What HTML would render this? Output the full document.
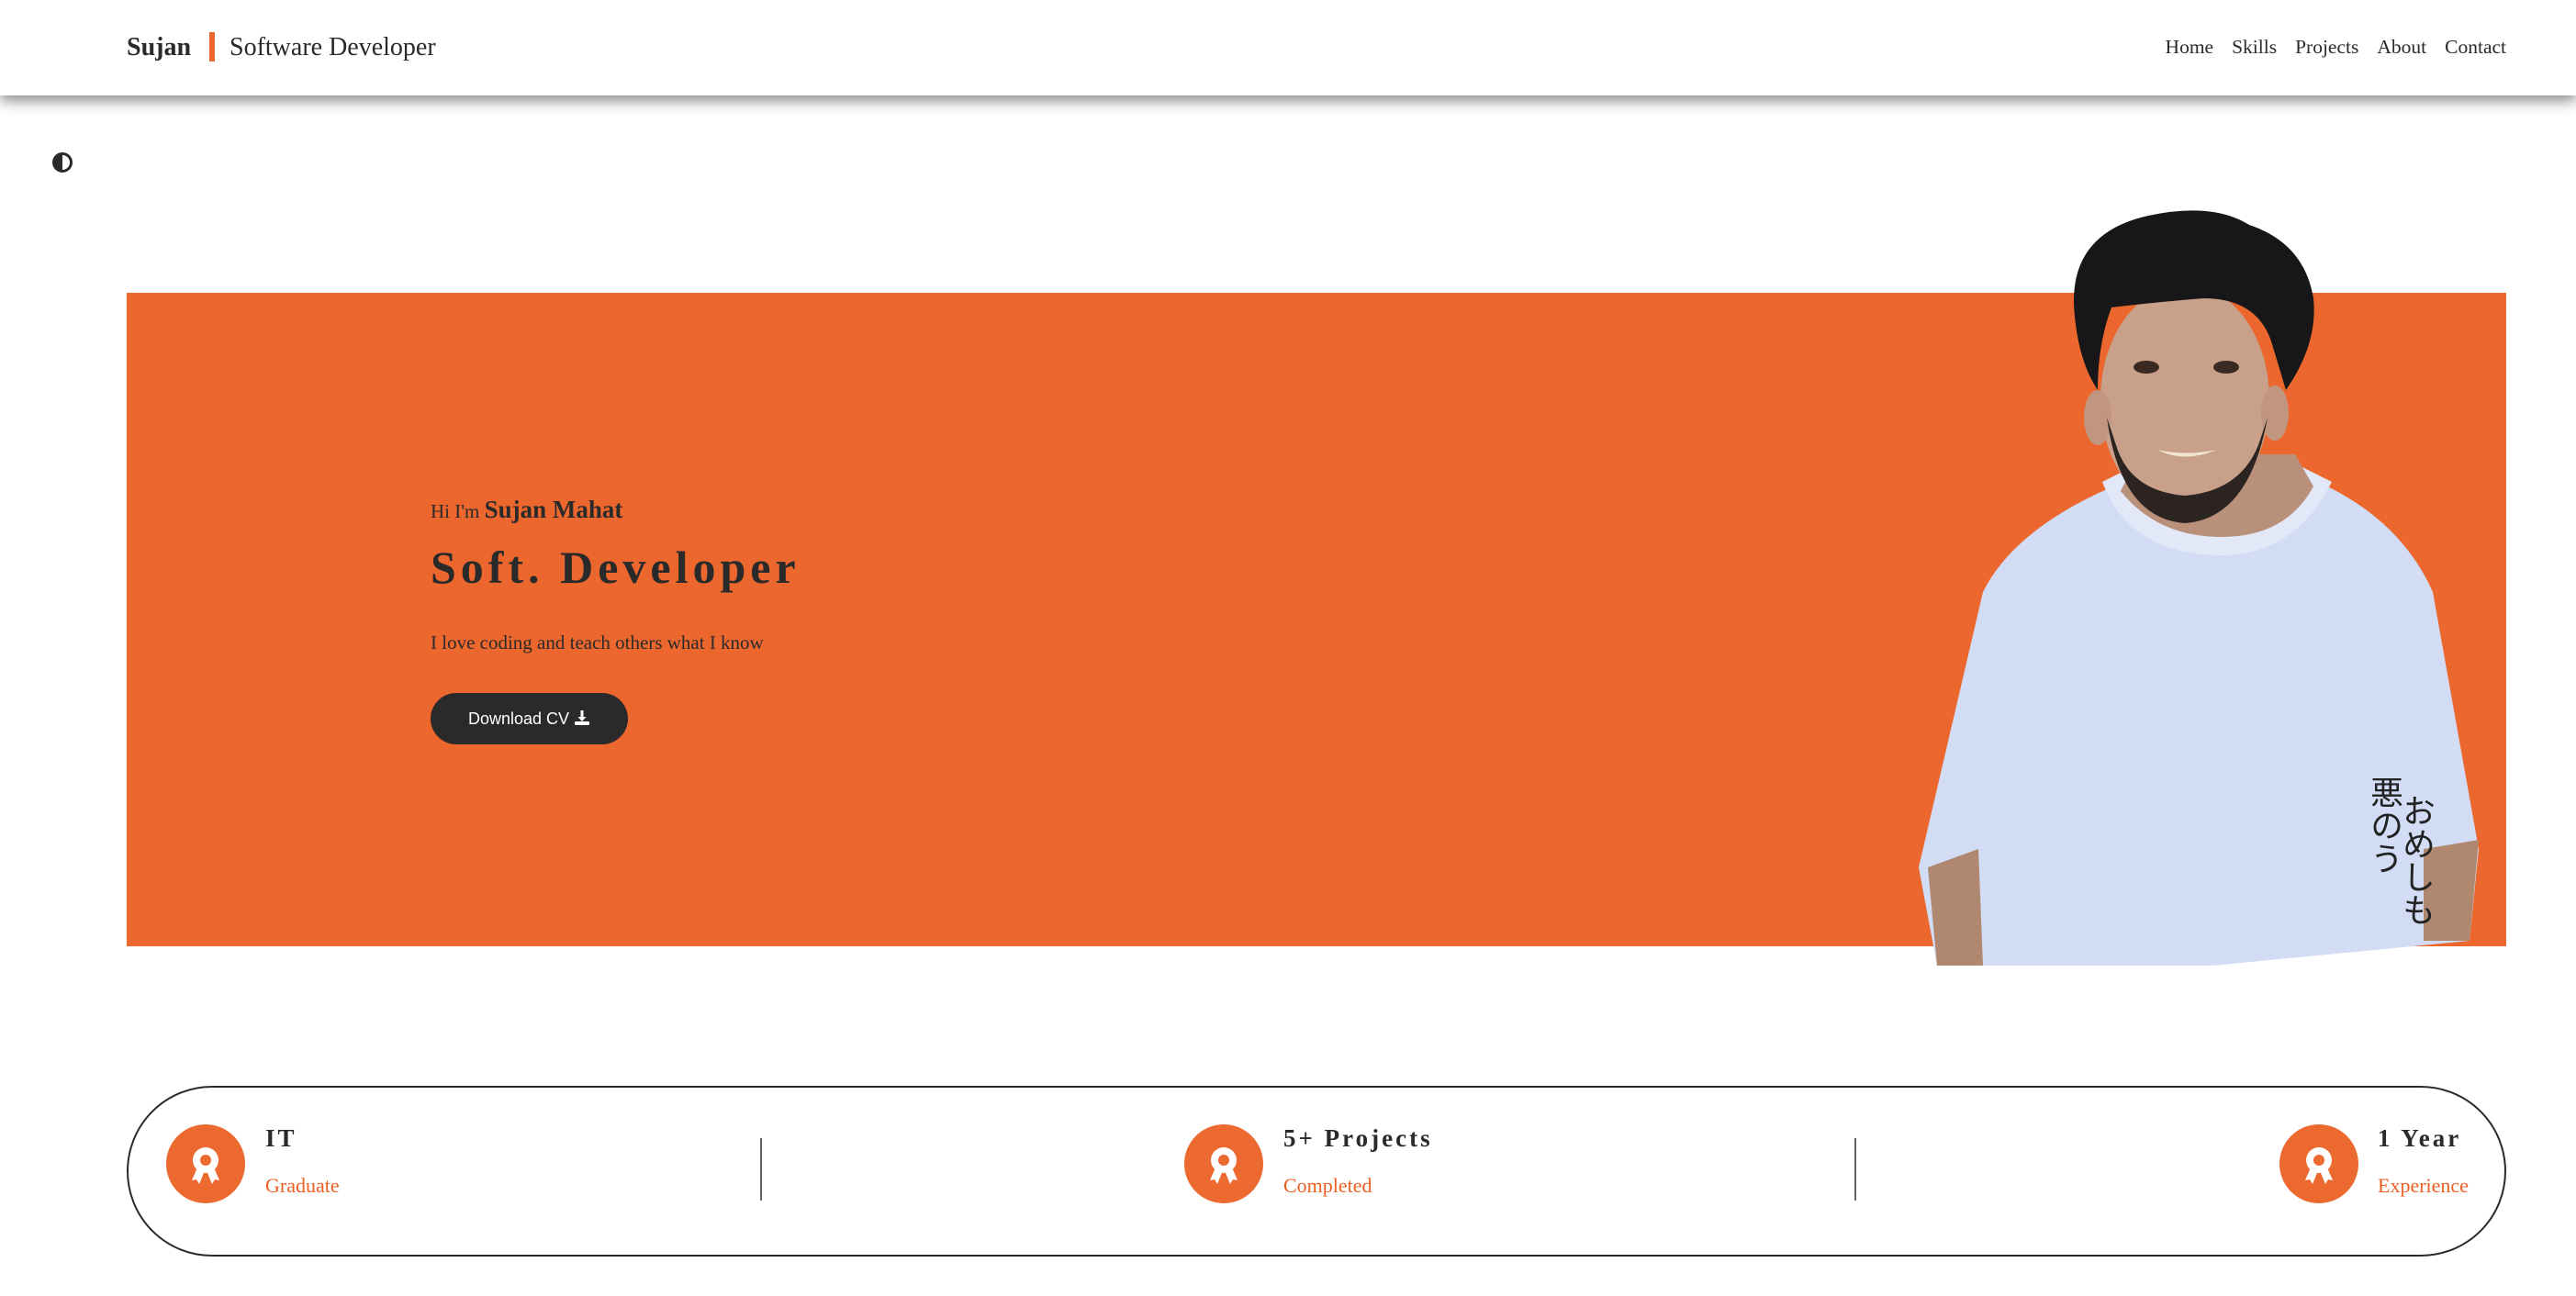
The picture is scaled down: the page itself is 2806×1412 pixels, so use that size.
<!DOCTYPE html>
<html><head><meta charset="utf-8">
<style>
*{margin:0;padding:0;box-sizing:border-box}
html,body{width:2806px;height:1412px;overflow:hidden;background:#fff;font-family:"Liberation Serif",serif;color:#2a2a2a}
.a{position:absolute;white-space:nowrap}
header{position:absolute;left:0;top:0;width:2806px;height:104px;background:#fff;box-shadow:0 6px 14px rgba(0,0,0,.45);z-index:2}
.nav span{margin-left:20px}
.ic{position:absolute;width:86px;height:86px;border-radius:50%;background:#ec692f}
.t{font-weight:bold;font-size:27px;letter-spacing:3px}
.s{font-size:22px;color:#ec5f23}
</style></head><body>
<header>
<div class="a" style="left:138px;top:36px;font-size:28px;font-weight:bold">Sujan</div>
<div class="a" style="left:228px;top:35px;width:6px;height:32px;background:#ec672d"></div>
<div class="a" style="left:250px;top:36px;font-size:28px">Software Developer</div>
<div class="a nav" style="right:76px;top:39px;font-size:21.5px"><span>Home</span><span>Skills</span><span>Projects</span><span>About</span><span>Contact</span></div>
</header>
<svg class="a" style="left:57px;top:166px" width="22" height="22" viewBox="0 0 22 22"><circle cx="11" cy="11" r="9.5" fill="none" stroke="#2a2a2a" stroke-width="3"/><path d="M11 1.5A9.5 9.5 0 0 0 11 20.5Z" fill="#2a2a2a"/></svg>

<div class="a" style="left:138px;top:319px;width:2592px;height:712px;background:#ec672d"></div>
<div class="a" style="left:469px;top:540px;font-size:21px">Hi I'm <b style="font-size:27px">Sujan Mahat</b></div>
<div class="a" style="left:469px;top:589px;font-size:50px;font-weight:bold;letter-spacing:5px">Soft. Developer</div>
<div class="a" style="left:469px;top:688px;font-size:21px">I love coding and teach others what I know</div>
<div class="a" style="left:469px;top:755px;width:215px;height:56px;border-radius:28px;background:#2a2a2a;color:#fff;font-family:'Liberation Sans',sans-serif;font-size:18px;line-height:56px;padding-left:41px">Download CV <svg width="18" height="18" viewBox="0 0 18 18" style="vertical-align:-2px"><path d="M7.5 1h3v7h3l-4.5 5-4.5-5h3z" fill="#fff"/><rect x="1" y="13" width="16" height="4" rx="1.5" fill="#fff"/></svg></div>

<!-- person -->
<svg class="a" style="left:2080px;top:225px" width="640" height="830" viewBox="0 0 640 830">
<path d="M10 720 L80 420 Q120 340 260 290 L420 290 Q530 330 570 420 L620 700 L610 800 L330 827 L30 827 Z" fill="#d2dcf5"/>
<path d="M20 720 L75 700 L80 827 L30 827Z" fill="#b08870"/>
<path d="M560 700 L620 690 L610 800 L560 800Z" fill="#b08870"/>
<path d="M210 300 Q240 380 340 380 Q420 380 460 300 L420 280 L250 280Z" fill="#e3e8f8"/>
<path d="M230 310 Q270 360 340 360 Q410 360 440 305 L420 270 L250 270Z" fill="#b99079"/>
<ellipse cx="300" cy="210" rx="92" ry="125" fill="#c9a089"/>
<ellipse cx="205" cy="230" rx="15" ry="30" fill="#c09680"/>
<ellipse cx="398" cy="225" rx="15" ry="30" fill="#c09680"/>
<path d="M215 230 Q230 340 300 345 Q370 340 390 230 L380 260 Q360 310 300 315 Q240 310 225 260Z" fill="#2b2420"/>
<path d="M180 120 Q170 30 260 10 Q330 -5 370 20 Q430 40 440 100 Q445 150 410 200 L395 150 Q380 100 320 100 Q260 105 220 110 Q205 150 205 200 Q185 170 180 120Z" fill="#17171a"/>
<ellipse cx="258" cy="175" rx="14" ry="7" fill="#3a2a22"/><ellipse cx="345" cy="175" rx="14" ry="7" fill="#3a2a22"/>
<path d="M270 265 Q300 280 335 265 Q300 272 270 265Z" fill="#f2e6d0"/>
<text x="555" y="640" font-family="Noto Sans CJK JP,sans-serif" font-size="36" fill="#222" writing-mode="tb">おめしも</text>
<text x="520" y="620" font-family="Noto Sans CJK JP,sans-serif" font-size="36" fill="#222" writing-mode="tb">悪のう</text>
</svg>

<div class="a" style="left:138px;top:1183px;width:2592px;height:186px;border:2px solid #2a2a2a;border-radius:93px"></div>
<div class="a" style="left:828px;top:1240px;width:2px;height:68px;background:#666"></div>
<div class="a" style="left:2020px;top:1240px;width:2px;height:68px;background:#666"></div>

<div class="ic" style="left:181px;top:1225px"></div>
<div class="ic" style="left:1290px;top:1225px"></div>
<div class="ic" style="left:2483px;top:1225px"></div>
<svg width="0" height="0" style="position:absolute"><defs><g id="aw"><path d="M-9 8 L-15 22 L-10 21 L-7 26 L-2 14Z M9 8 L15 22 L10 21 L7 26 L2 14Z" fill="#fff"/><circle r="14" fill="#fff"/><circle r="6" fill="#ec692f"/></g></defs></svg>
<svg class="a" style="left:181px;top:1225px" width="86" height="86"><use href="#aw" x="43" y="39"/></svg>
<svg class="a" style="left:1290px;top:1225px" width="86" height="86"><use href="#aw" x="43" y="39"/></svg>
<svg class="a" style="left:2483px;top:1225px" width="86" height="86"><use href="#aw" x="43" y="39"/></svg>

<div class="a t" style="left:289px;top:1225px">IT</div>
<div class="a s" style="left:289px;top:1279px">Graduate</div>
<div class="a t" style="left:1398px;top:1225px">5+ Projects</div>
<div class="a s" style="left:1398px;top:1279px">Completed</div>
<div class="a t" style="left:2590px;top:1225px">1 Year</div>
<div class="a s" style="left:2590px;top:1279px">Experience</div>
</body></html>
